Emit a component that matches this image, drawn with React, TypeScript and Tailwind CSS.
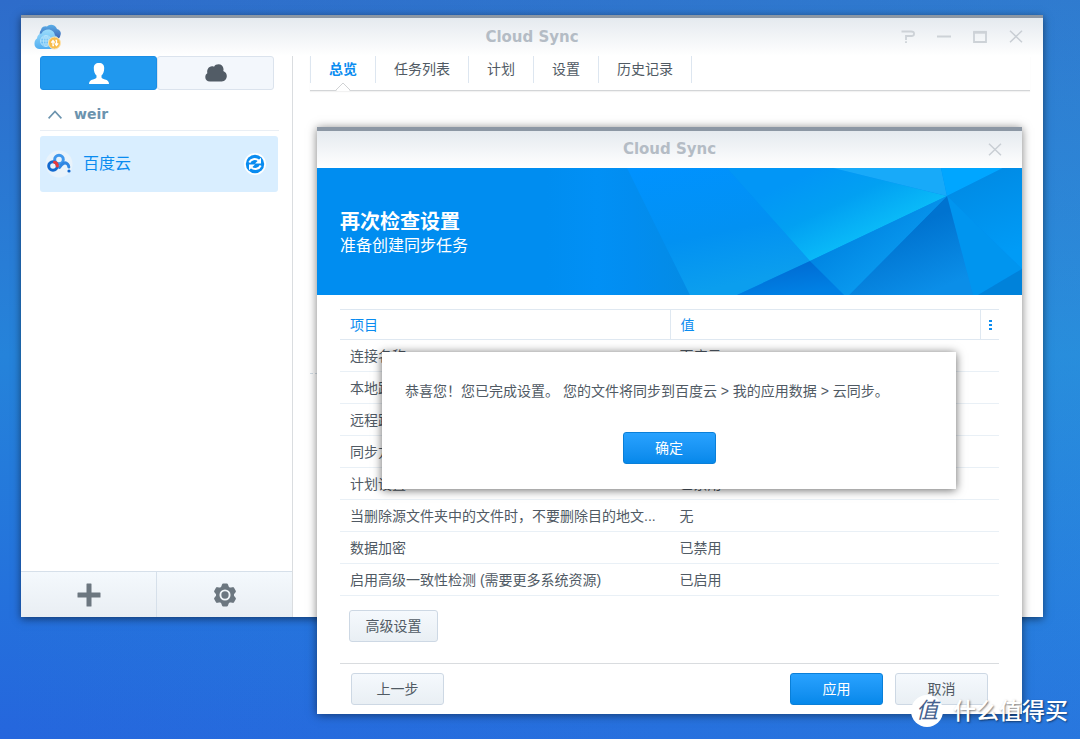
import type { ReactNode } from "react";

const tabs = ["总览", "任务列表", "计划", "设置", "历史记录"];

const rows = [
  { item: "连接名称", value: "百度云" },
  { item: "本地路径", value: "" },
  { item: "远程路径", value: "" },
  { item: "同步方向", value: "" },
  { item: "计划设置", value: "已禁用" },
  { item: "当删除源文件夹中的文件时，不要删除目的地文...", value: "无" },
  { item: "数据加密", value: "已禁用" },
  { item: "启用高级一致性检测 (需要更多系统资源)", value: "已启用" },
];

function CloudSyncLogo() {
  return (
    <svg width="28" height="26" viewBox="0 0 28 26" aria-hidden="true">
      <defs>
        <linearGradient id="cloudFront" x1="0" y1="0" x2="0" y2="1">
          <stop offset="0" stopColor="#9bdcfb" />
          <stop offset="1" stopColor="#52aef0" />
        </linearGradient>
        <linearGradient id="cloudBack" x1="0" y1="0" x2="0" y2="1">
          <stop offset="0" stopColor="#5aaee8" />
          <stop offset="1" stopColor="#3d63b4" />
        </linearGradient>
      </defs>
      <path d="M9 14a5 5 0 0 1-2-8 4.500 4.500 0 0 1 6-3.500 6 6 0 0 1 10 2.500 4.500 4.500 0 0 1 3.500 6c-.5 3-2 4-4.500 4z" fill="url(#cloudBack)" />
      <path d="M5 25a5 5 0 0 1-4.500-5.500c0-2.500 1-4 2.500-5 .2-3 2-5 4.500-5 1.500-3 4-4 6.500-4 4 0 6.500 2.500 7 6 2.500.5 4 3 4 6.500s-1.500 7-5 7z" fill="url(#cloudFront)" />
      <g fill="none" stroke="#b5e3fb" strokeWidth="0.9">
        <circle cx="12" cy="17" r="5.500" />
        <ellipse cx="12" cy="17" rx="2.500" ry="5.500" />
        <path d="M6.500 17h11M7.500 14h9M7.500 20h9M12 11.500v11" />
      </g>
      <circle cx="20.500" cy="19" r="6" fill="#f8bd4c" stroke="#fde3b0" strokeWidth="1" />
      <path d="M20 21.700h-1v-4.500M17.300 18.600l1.700-2 1.700 2M21.500 16.300h1v4.500M20.800 19.400l1.700 2 1.700-2" fill="none" stroke="#fff" strokeWidth="1.300" />
    </svg>
  );
}

function BaiduLogo() {
  return (
    <svg width="28" height="28" viewBox="0 0 28 28" aria-hidden="true">
      <circle cx="14" cy="14" r="13.500" fill="#e9f3fb" />
      <g fill="none" strokeWidth="3" strokeLinecap="round">
        <circle cx="14" cy="9.500" r="4.300" stroke="#3f97ec" />
        <circle cx="8" cy="16" r="4.300" stroke="#1269cf" />
        <path d="M14.500 17.500C17 13.500 20 11.500 22.500 14c.8.8 1.200 1.700 1.300 3" stroke="#2f86e2" />
        <path d="M9.500 12.200c2.200.8 2.800 2 2.800 3.800" stroke="#e8393c" />
      </g>
      <circle cx="24" cy="21" r="1.600" fill="#1269cf" />
    </svg>
  );
}

function SyncBadge() {
  return (
    <svg width="22" height="22" viewBox="0 0 22 22" aria-hidden="true">
      <circle cx="11" cy="11" r="11" fill="#fff" />
      <circle cx="11" cy="11" r="9.200" fill="#0a8cf0" />
      <g fill="none" stroke="#fff" strokeWidth="2">
        <path d="M5.300 9.500c1.500-3.500 6.200-4.600 9.400-2" />
        <path d="M16.700 12.500c-1.500 3.500-6.200 4.600-9.400 2" />
      </g>
      <path d="M17 4.800v5.600h-6zM5 17.200v-5.600h6z" fill="#fff" />
    </svg>
  );
}

function GearIcon() {
  return (
    <svg width="24" height="24" viewBox="-12 -12 24 24" aria-hidden="true">
      <g fill="#6c7780">
        <circle r="9" />
        {[0, 60, 120, 180, 240, 300].map((angle) => (
          <path key={angle} d="M-4.200-7l1.200-3.500q.3-.9 1.300-.9h3.400q1 0 1.300.9L4.200-7z" transform={`rotate(${angle})`} />
        ))}
      </g>
      <circle r="4.600" fill="#6c7780" stroke="#f1f5f8" strokeWidth="1.900" />
    </svg>
  );
}

function CloseIcon() {
  return (
    <svg width="14" height="14" viewBox="0 0 14 14" fill="none" stroke="#c9ced4" strokeWidth="1.500" aria-hidden="true">
      <path d="M1 .8l12 11.400M13 .8L1 12.200" />
    </svg>
  );
}

function BannerArt() {
  return (
    <svg className="absolute inset-0 h-full w-full" viewBox="0 0 705 127" preserveAspectRatio="xMaxYMid slice" aria-hidden="true">
      <defs>
        <linearGradient id="fadeLeft" x1="0" y1="0" x2="1" y2="0">
          <stop offset="0" stopColor="#008df0" />
          <stop offset="0.35" stopColor="#0190f5" />
          <stop offset="0.6" stopColor="#028df0" />
          <stop offset="1" stopColor="#048be4" />
        </linearGradient>
        <linearGradient id="facetB" x1="0" y1="0" x2="0.3" y2="1">
          <stop offset="0" stopColor="#0092ff" />
          <stop offset="0.6" stopColor="#0291f2" />
          <stop offset="1" stopColor="#0b9eee" />
        </linearGradient>
        <linearGradient id="facetC" gradientUnits="userSpaceOnUse" x1="500" y1="0" x2="536" y2="74">
          <stop offset="0" stopColor="#0296f6" />
          <stop offset="0.5" stopColor="#02a0f2" />
          <stop offset="1" stopColor="#0abaf8" />
        </linearGradient>
        <linearGradient id="facetF" x1="0" y1="0" x2="0.3" y2="1">
          <stop offset="0" stopColor="#0088e2" />
          <stop offset="1" stopColor="#009bf6" />
        </linearGradient>
        <linearGradient id="facetH" x1="0.3" y1="0.4" x2="0.6" y2="1">
          <stop offset="0" stopColor="#0073d0" />
          <stop offset="1" stopColor="#0b8ee8" />
        </linearGradient>
        <linearGradient id="facetI" x1="0" y1="0.6" x2="0.4" y2="1">
          <stop offset="0" stopColor="#0084e2" />
          <stop offset="1" stopColor="#0a9cf0" />
        </linearGradient>
        <linearGradient id="facetJ" x1="0" y1="0" x2="0.4" y2="1">
          <stop offset="0" stopColor="#0066cf" />
          <stop offset="1" stopColor="#0080e4" />
        </linearGradient>
      </defs>
      <rect width="705" height="127" fill="#008df0" />
      <path d="M230 0H310L373 127H230z" fill="url(#fadeLeft)" />
      <path d="M310 0H410L493 93L420 127H373z" fill="url(#facetB)" />
      <path d="M410 0H516L630 28L493 93z" fill="url(#facetC)" />
      <path d="M516 0H624L630 28z" fill="#18aaf9" />
      <path d="M624 0H686L630 28z" fill="#00a6ff" />
      <path d="M686 0H705V101L630 28z" fill="url(#facetF)" />
      <path d="M630 28L705 101L661 127H656z" fill="#0095ef" />
      <path d="M630 28L656 127H532z" fill="url(#facetH)" />
      <path d="M630 28L532 127H527L493 93z" fill="url(#facetI)" />
      <path d="M493 93L527 127H420z" fill="url(#facetJ)" />
      <path d="M705 101V127H661z" fill="#0082da" />
    </svg>
  );
}

function PrimaryButton({ children }: { children: ReactNode }) {
  return (
    <button className="h-8 w-[93px] rounded-[3px] border border-[#0a7fd8] bg-linear-to-b from-[#28a2ff] to-[#0588ea] text-sm text-white">
      {children}
    </button>
  );
}

function PlainButton({ children, className = "w-[93px]" }: { children: ReactNode; className?: string }) {
  return (
    <button className={`h-8 rounded-[3px] border border-[#cdd8e4] bg-linear-to-b from-[#f5f9fd] to-[#e9eff4] text-sm text-[#505a64] ${className}`}>
      {children}
    </button>
  );
}

function Sidebar() {
  return (
    <aside className="flex w-[272px] shrink-0 flex-col border-r border-[#dadde0]">
      <div className="mr-[18px] ml-[19px] flex">
        <button aria-pressed="true" className="flex h-[34px] flex-1 items-center justify-center rounded-[3px] border border-[#1a8ee6] bg-[#2098ee]">
          <svg width="20" height="21" viewBox="0 0 20 21" fill="#fff" aria-hidden="true">
            <path d="M10 0c3.600 0 5.200 2 5.200 5 0 3.500-1 6.200-2.700 7.400v1.800c0 1.200 1.500 1.600 3.500 2.200 2.500.7 4 1.600 4 4.600H0c0-3 1.500-3.900 4-4.600 2-.6 3.500-1 3.500-2.200v-1.800C5.800 11.200 4.800 8.500 4.800 5c0-3 1.600-5 5.200-5z" />
          </svg>
        </button>
        <button className="flex h-[34px] flex-1 items-center justify-center rounded-[3px] border border-[#dbe3ed] bg-[#f3f7fc]">
          <svg width="22" height="18" viewBox="0 0 22 18" fill="#525c66" aria-hidden="true">
            <path d="M5 17.500c-3 0-4.700-1.800-4.700-4.300 0-2 .7-3.200 2-4C1.700 5.500 3.500 2.500 7 2.300c.8 0 1.400.1 2 .4C10 1 11.500.3 13.500.3c2.800 0 4.700 1.800 5 4.600 0 .8 0 1.400-.2 2 2.300 1 3.500 2.800 3.500 5.200 0 3-2 5.400-5 5.400z" />
          </svg>
        </button>
      </div>
      <div className="mr-[13px] ml-[19px] flex h-[41px] items-center gap-3 border-b border-[#e9eef4] pt-2 pl-2">
        <svg width="14" height="9" viewBox="0 0 14 9" fill="none" stroke="#6b93ae" strokeWidth="1.600" aria-hidden="true">
          <path d="M.6 8.400L7 1.500l6.400 6.900" />
        </svg>
        <span className="font-['DejaVu_Sans',sans-serif] text-sm font-bold text-[#6b93ae]">weir</span>
      </div>
      <a href="#baidu" className="mt-[5px] mr-[14px] ml-[19px] flex h-14 items-center rounded-[3px] bg-[#d9eeff] pr-3 pl-[5px]">
        <BaiduLogo />
        <span className="ml-[10px] flex-1 text-base leading-6 text-[#0a8cf0]">百度云</span>
        <SyncBadge />
      </a>
      <div className="mt-auto flex h-[46px] border-t border-[#d6e0ea] bg-linear-to-b from-[#f4f9fd] to-[#e9eef3]">
        <button aria-label="+" className="flex flex-1 items-center justify-center border-r border-[#d6e0ea]">
          <svg width="24" height="24" viewBox="0 0 24 24" fill="#6c7780" aria-hidden="true">
            <path d="M10 .5h4q.5 0 .5.5v8.500H23q.5 0 .5.5v4q0 .5-.5.500h-8.500V23q0 .5-.5.500h-4q-.5 0-.5-.5v-8.500H1q-.5 0-.5-.5v-4q0-.5.5-.5h8.500V1q0-.5.5-.5z" />
          </svg>
        </button>
        <button aria-label="设置" className="flex flex-1 items-center justify-center">
          <GearIcon />
        </button>
      </div>
    </aside>
  );
}

function MainWindow() {
  return (
    <div className="absolute top-[15px] right-[37px] bottom-[122px] left-[21px] flex flex-col border-t-[3px] border-[#8c97a4] bg-white shadow-[0_2px_8px_rgba(0,0,0,0.5)]">
      <header className="grid h-[38px] shrink-0 grid-cols-[1fr_auto_1fr] items-center bg-linear-to-b from-[#e5eaef] to-white">
        <div className="pl-[13px]">
          <CloudSyncLogo />
        </div>
        <h1 className="font-['DejaVu_Sans',sans-serif] text-[15px] font-bold text-[#b4bcc5]">Cloud Sync</h1>
        <div className="flex items-center justify-end gap-[22px] pr-5">
          <button aria-label="?">
            <svg width="14" height="14" viewBox="0 0 14 14" fill="none" stroke="#cdd2d7" strokeWidth="1.800" aria-hidden="true">
              <path d="M.5 1.500H10q3 0 3 1.800v1q0 1.700-2.500 1.700H5v4M4.100 12.200h1.800" />
            </svg>
          </button>
          <button aria-label="-">
            <svg width="14" height="14" viewBox="0 0 14 14" stroke="#cdd2d7" strokeWidth="2" aria-hidden="true">
              <path d="M0 6.500h14" />
            </svg>
          </button>
          <button aria-label="□">
            <svg width="14" height="14" viewBox="0 0 14 14" fill="none" stroke="#cdd2d7" aria-hidden="true">
              <path d="M1 1.800v10.200h12V1.800" strokeWidth="1.800" />
              <path d="M.1 2.300h13.800" strokeWidth="2.800" />
            </svg>
          </button>
          <button aria-label="×">
            <CloseIcon />
          </button>
        </div>
      </header>
      <div className="flex min-h-0 flex-1">
        <Sidebar />
        <main className="flex-1 pr-[13px] pl-[17px]">
          <nav className="relative flex border-b border-[#d3d5d7] pb-[7px] shadow-[0_1px_1px_rgba(0,0,0,0.05)]">
            {tabs.map((tab, i) => (
              <a
                key={tab}
                href="#tab"
                className={
                  i === 0
                    ? "h-[27px] border-x border-[#dde6f0] px-[18px] text-sm leading-[27px] font-bold text-[#0a8cf0]"
                    : "h-[27px] border-r border-[#dde6f0] px-[18px] text-sm leading-[27px] text-[#505a64]"
                }
              >
                {tab}
              </a>
            ))}
            <svg className="absolute -bottom-px left-[25px]" width="16" height="9" viewBox="0 0 16 9" aria-hidden="true">
              <path d="M1 9L8 1.500 15 9z" fill="#fff" />
              <path d="M.5 8.500L8 1l7.500 7.500" fill="none" stroke="#d0d2d4" />
            </svg>
          </nav>
          <div className="mt-[282px] w-1/2 border-t border-dashed border-[#d3dde6]" />
        </main>
      </div>
    </div>
  );
}

function SettingsDialog() {
  return (
    <section className="absolute top-[127px] right-[58px] left-[317px] border-t-4 border-[#8c97a4] bg-white shadow-[0_1px_9px_rgba(0,0,0,0.5)]">
      <header className="grid h-[37px] grid-cols-[1fr_auto_1fr] items-center bg-linear-to-b from-[#e5eaef] to-white">
        <div />
        <h2 className="font-['DejaVu_Sans',sans-serif] text-[15px] font-bold text-[#b4bcc5]">Cloud Sync</h2>
        <div className="flex justify-end pr-5">
          <button aria-label="×">
            <CloseIcon />
          </button>
        </div>
      </header>
      <div className="relative h-[127px] bg-[#008df0]">
        <BannerArt />
        <div className="relative px-[23px] pt-[42px] text-white">
          <p className="text-xl leading-6 font-bold">再次检查设置</p>
          <p className="text-base leading-6">准备创建同步任务</p>
        </div>
      </div>
      <div className="px-[23px] pt-[14px]">
        <table className="w-full table-fixed border-separate border-spacing-0 text-left text-sm leading-5 text-[#505a64]">
          <colgroup>
            <col className="w-1/2" />
            <col />
            <col className="w-[19px]" />
          </colgroup>
          <thead>
            <tr className="text-[#0a8cf0]">
              <th className="h-[31px] border-y border-[#dfe8f1] px-[10px] font-normal">项目</th>
              <th className="h-[31px] border-y border-l border-[#dfe8f1] px-[10px] font-normal">值</th>
              <th className="h-[31px] border-y border-l border-[#dfe8f1]">
                <button aria-label="项目" className="flex w-full justify-center">
                  <svg width="3" height="10" viewBox="0 0 3 10" fill="#0a8cf0" aria-hidden="true">
                    <path d="M0 0h3v2H0zM0 4h3v2H0zM0 8h3v2H0z" />
                  </svg>
                </button>
              </th>
            </tr>
          </thead>
          <tbody>
            {rows.map((row) => (
              <tr key={row.item}>
                <td className="h-8 border-b border-[#e9f0f6] px-[10px] whitespace-nowrap">{row.item}</td>
                <td className="h-8 border-b border-[#e9f0f6] px-[10px]" colSpan={2}>
                  {row.value}
                </td>
              </tr>
            ))}
          </tbody>
        </table>
        <PlainButton className="mt-[14px] ml-[9px] w-[89px]">高级设置</PlainButton>
      </div>
      <footer className="mx-[23px] mt-[21px] flex gap-3 border-t border-[#d9dcdf] px-[11px] py-[9px]">
        <PlainButton>上一步</PlainButton>
        <div className="flex-1" />
        <PrimaryButton>应用</PrimaryButton>
        <PlainButton>取消</PlainButton>
      </footer>
    </section>
  );
}

function MessageBox() {
  return (
    <div role="alertdialog" className="absolute top-[352px] right-[124px] left-[382px] bg-white px-[23px] pt-[29px] pb-[25px] shadow-[0_1px_9px_rgba(0,0,0,0.6)]">
      <p className="text-sm leading-5 whitespace-nowrap text-[#505a64]">
        恭喜您！您已完成设置。 您的文件将同步到百度云 &gt; 我的应用数据 &gt; 云同步。
      </p>
      <div className="mt-[31px] flex justify-center">
        <PrimaryButton>确定</PrimaryButton>
      </div>
    </div>
  );
}

function Watermark() {
  return (
    <div className="absolute right-3 bottom-3 flex items-center gap-[10px] text-white">
      <span className="flex size-8 items-center justify-center rounded-full bg-white text-[22px] leading-8 text-[#45618f] italic">值</span>
      <span className="text-[23px] leading-8 font-medium [text-shadow:1px_1px_2px_rgba(0,0,0,0.5)]">什么值得买</span>
    </div>
  );
}

export default function App() {
  return (
    <div className="h-screen bg-linear-to-b from-[#2e6cca] via-[#2583da] via-48% to-[#2566dd] font-['Liberation_Sans','Noto_Sans_CJK_SC',sans-serif]">
      <div className="relative h-full overflow-hidden bg-linear-to-r from-transparent to-[#35b8e4]/20">
        <MainWindow />
        <SettingsDialog />
        <MessageBox />
        <Watermark />
      </div>
    </div>
  );
}
